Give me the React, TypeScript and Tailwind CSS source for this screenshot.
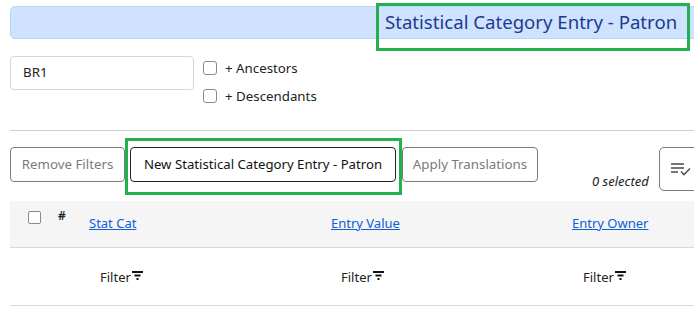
import React from "react";

const font = { fontFamily: '"Noto Sans", "Open Sans", Arial, sans-serif' };

function FilterIcon() {
  return (
    <svg width="11" height="9" viewBox="0 0 11 9" className="inline-block ml-[1px] -mt-[6px]">
      <rect x="0" y="0" width="11" height="2" fill="#111" />
      <rect x="2.5" y="3.5" width="6" height="2" fill="#111" />
      <rect x="4.5" y="7" width="2" height="2" fill="#111" />
    </svg>
  );
}

function ListCheck() {
  return (
    <svg width="22" height="16" viewBox="0 0 22 16">
      <g stroke="#555" strokeWidth="1.6" fill="none">
        <line x1="1" y1="3" x2="14" y2="3" />
        <line x1="1" y1="7" x2="14" y2="7" />
        <line x1="1" y1="11" x2="8" y2="11" />
        <polyline points="11,10.5 14,13.5 20,7.5" />
      </g>
    </svg>
  );
}

function Box() {
  return <span className="inline-block w-[14px] h-[14px] rounded-[3px] border-[1.5px] border-[#8a8a8a] bg-white" />;
}

export default function App() {
  return (
    <div className="w-[694px] h-[316px] overflow-hidden bg-white relative" style={font}>
      <div className="w-[740px] pl-[10px]">
        <div className="mt-[6px] h-[33px] rounded-[5px] border border-[#b6d4fe] bg-[#cfe2ff] flex items-center pl-[374px]">
          <span className="text-[18.6px] text-[#1d3b8e] leading-none">Statistical Category Entry - Patron</span>
        </div>

        <div className="mt-[17px] flex items-start">
          <div className="w-[184px] h-[34px] rounded-[4px] border border-[#d4d7da] flex items-center pl-[12px] text-[13.3px] text-[#222]">BR1</div>
          <div className="ml-[9px] flex flex-col gap-[14px] pt-[5px] text-[13.3px] text-[#222]">
            <label className="flex items-center gap-[8px] leading-[14px]"><Box /><span className="-mt-[1px]">+ Ancestors</span></label>
            <label className="flex items-center gap-[8px] leading-[14px]"><Box /><span className="-mt-[1px]">+ Descendants</span></label>
          </div>
        </div>

        <div className="mt-[27px] border-t border-[#cfcfcf]" />

        <div className="mt-[16px] flex items-start">
          <button className="h-[35px] w-[115px] rounded-[4px] border border-[#7a7a7a] text-[13.3px] text-[#7b7b7b] bg-white">Remove Filters</button>
          <button className="ml-[5px] h-[35px] w-[266px] rounded-[4px] border border-[#222] text-[13.2px] text-[#111] bg-white">New Statistical Category Entry - Patron</button>
          <button className="ml-[6px] h-[35px] w-[136px] rounded-[4px] border border-[#7a7a7a] text-[13.3px] text-[#7b7b7b] bg-white">Apply Translations</button>
          <span className="ml-[54px] mt-[25px] text-[13px] italic text-[#222] w-[59px] whitespace-nowrap">0 selected</span>
          <button className="ml-[8px] h-[44px] w-[50px] rounded-[5px] border border-[#7a7a7a] bg-white flex items-center justify-center pr-[6px]"><ListCheck /></button>
        </div>

        <div className="mt-[9px] bg-[#f5f5f5] h-[47px] border-b border-[#d9d9d9] relative text-[13px]">
          <div className="absolute left-[18px] top-[9px]"><span className="inline-block w-[13px] h-[13px] rounded-[2px] border border-[#8a8a8a] bg-white" /></div>
          <div className="absolute left-[48px] top-[6px] text-[12px] font-semibold text-[#222]">#</div>
          <div className="flex pl-[79px] pt-[13px]">
            <a className="w-[242px] text-[#0d5fd6] underline">Stat Cat</a>
            <a className="w-[241px] text-[#0d5fd6] underline">Entry Value</a>
            <a className="text-[#0d5fd6] underline">Entry Owner</a>
          </div>
        </div>

        <div className="h-[58px] border-b border-[#d9d9d9] flex items-center pt-[3px] pl-[90px] text-[13px] text-[#222]">
          <span className="w-[241px]">Filter<FilterIcon /></span>
          <span className="w-[242px]">Filter<FilterIcon /></span>
          <span>Filter<FilterIcon /></span>
        </div>
      </div>

      <div className="absolute left-[376px] top-[3px] w-[314px] h-[48px] border-[3px] border-[#22b14c]" />
      <div className="absolute left-[125px] top-[138px] w-[277px] h-[57px] border-[3px] border-[#22b14c]" />
    </div>
  );
}
